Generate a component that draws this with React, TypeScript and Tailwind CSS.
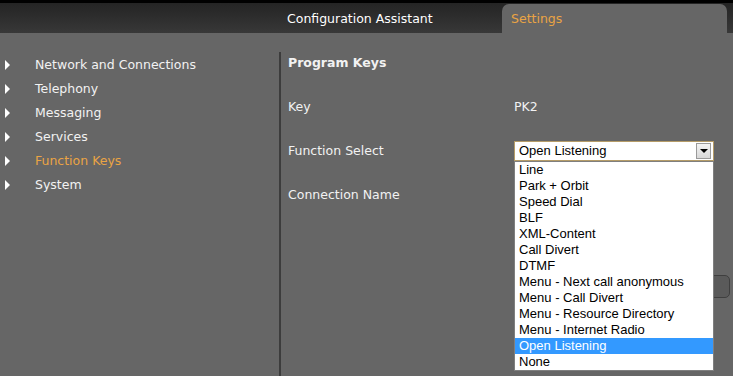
const MENU = [
  'Network and Connections',
  'Telephony',
  'Messaging',
  'Services',
  'Function Keys',
  'System',
]

const OPCIONES = [
  'Line',
  'Park + Orbit',
  'Speed Dial',
  'BLF',
  'XML-Content',
  'Call Divert',
  'DTMF',
  'Menu - Next call anonymous',
  'Menu - Call Divert',
  'Menu - Resource Directory',
  'Menu - Internet Radio',
  'Open Listening',
  'None',
]

const ACTIVO = 'Function Keys'
const SELECCION = 'Open Listening'

function Triangulo() {
  return <span className="w-0 h-0 border-y-[5px] border-y-transparent border-l-[5px] border-l-white" />
}

export default function App() {
  return (
    <div className="w-[733px] h-[376px] overflow-hidden bg-[#666666] flex flex-col font-['DejaVu_Sans',sans-serif] text-[12.5px] text-[#f2f2f2]">
      {/* barra superior con pestañas */}
      <div className="h-[33px] shrink-0 flex items-end border-t-[3px] border-black bg-gradient-to-b from-[#242424] to-[#383838]">
        <div className="ml-[287px] w-[215px] h-[29px] pt-[1px] flex items-center text-white">Configuration Assistant</div>
        <div className="w-[225px] h-[29px] rounded-t-[7px] bg-[#666666] pl-[9px] pt-[1px] flex items-center text-[#eaa444]">
          Settings
        </div>
      </div>

      <div className="flex flex-1 min-h-0">
        {/* menú lateral */}
        <div className="w-[279px] shrink-0 pt-[20px]">
          {MENU.map((m) => (
            <div key={m} className="h-[24px] flex items-center pl-[5px]">
              <Triangulo />
              <span className={`ml-[25px] ${m === ACTIVO ? 'text-[#eaa444]' : ''}`}>{m}</span>
            </div>
          ))}
        </div>

        {/* contenido */}
        <div className="flex-1 mt-[19px] border-l-2 border-[#3c3c3c] pl-[7px] pt-[1px] relative">
          <div className="h-[20px] flex items-center font-bold">Program Keys</div>
          <div className="mt-[12px]">
            <div className="h-[44px] flex items-center">
              <span className="w-[226px]">Key</span>
              <span>PK2</span>
            </div>
            <div className="h-[44px] flex items-center">
              <span className="w-[226px]">Function Select</span>
              <div className="w-[200px] h-[20px] bg-white border border-[#b59c68] flex items-center pl-[4px] pr-[2px] font-['Liberation_Sans',Arial,sans-serif] text-[13px] text-black">
                <span className="flex-1">{SELECCION}</span>
                <span className="w-[15px] h-[16px] bg-gradient-to-b from-[#f4f4f4] to-[#d8d8d8] border border-[#9a9a9a] flex items-center justify-center">
                  <span className="w-0 h-0 border-x-[4px] border-x-transparent border-t-[4px] border-t-black" />
                </span>
              </div>
            </div>
            <div className="h-[44px] flex items-center">
              <span className="w-[226px]">Connection Name</span>
            </div>
          </div>
          <div className="mt-[58px] flex justify-end pr-[3px]">
            <div className="w-[90px] h-[23px] rounded-[5px] bg-[#5a5a5a] border border-[#3f3f3f]" />
          </div>

          {/* lista desplegable abierta */}
          <div className="absolute left-[233px] top-[109px] w-[200px] bg-white border border-[#7f7f7f] font-['Liberation_Sans',Arial,sans-serif] text-[13px] text-black">
            {OPCIONES.map((o) => (
              <div
                key={o}
                className={`h-[16px] leading-[16px] pl-[4px] ${o === SELECCION ? 'bg-[#3399ff] text-white' : ''}`}
              >
                {o}
              </div>
            ))}
          </div>
        </div>
      </div>
    </div>
  )
}
